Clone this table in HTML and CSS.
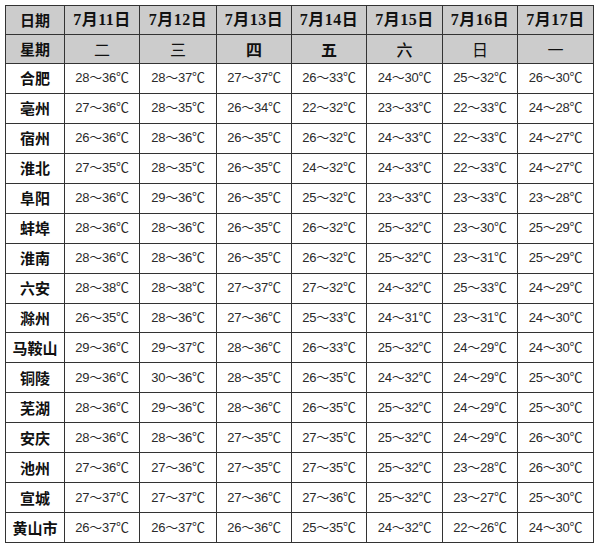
FILE: index.html
```html
<!DOCTYPE html>
<html lang="zh">
<head>
<meta charset="utf-8">
<link rel="stylesheet" href="styles.css">
</head>
<body>
<div class="page">
<table class="weather">
<colgroup>
<col class="c-city"><col class="c75"><col class="c77"><col class="c75"><col class="c75"><col class="c76"><col class="c75"><col class="c76">
</colgroup>
<thead>
<tr class="head"><th class="lab">日期</th><th>7月11日</th><th>7月12日</th><th>7月13日</th><th>7月14日</th><th>7月15日</th><th>7月16日</th><th>7月17日</th></tr>
<tr class="head"><th class="lab">星期</th><th class="wk">二</th><th class="wk">三</th><th class="wk strong">四</th><th class="wk strong">五</th><th class="wk mid">六</th><th class="wk">日</th><th class="wk">一</th></tr>
</thead>
<tbody>
<tr><th>合肥</th><td>28～36℃</td><td>28～37℃</td><td>27～37℃</td><td>26～33℃</td><td>24～30℃</td><td>25～32℃</td><td>26～30℃</td></tr>
<tr><th>亳州</th><td>27～36℃</td><td>28～35℃</td><td>26～34℃</td><td>22～32℃</td><td>23～33℃</td><td>22～33℃</td><td>24～28℃</td></tr>
<tr><th>宿州</th><td>26～36℃</td><td>28～36℃</td><td>26～35℃</td><td>26～32℃</td><td>24～33℃</td><td>22～33℃</td><td>24～27℃</td></tr>
<tr><th>淮北</th><td>27～35℃</td><td>28～35℃</td><td>26～35℃</td><td>24～32℃</td><td>24～33℃</td><td>22～33℃</td><td>24～27℃</td></tr>
<tr><th>阜阳</th><td>28～36℃</td><td>29～36℃</td><td>26～35℃</td><td>25～32℃</td><td>23～33℃</td><td>23～33℃</td><td>23～28℃</td></tr>
<tr><th>蚌埠</th><td>28～36℃</td><td>28～36℃</td><td>26～35℃</td><td>26～32℃</td><td>25～32℃</td><td>23～30℃</td><td>25～29℃</td></tr>
<tr><th>淮南</th><td>28～36℃</td><td>28～36℃</td><td>26～35℃</td><td>26～32℃</td><td>25～32℃</td><td>23～31℃</td><td>25～29℃</td></tr>
<tr><th>六安</th><td>28～38℃</td><td>28～38℃</td><td>27～37℃</td><td>27～32℃</td><td>24～32℃</td><td>25～33℃</td><td>24～29℃</td></tr>
<tr><th>滁州</th><td>26～35℃</td><td>28～36℃</td><td>27～36℃</td><td>25～33℃</td><td>24～31℃</td><td>23～31℃</td><td>24～30℃</td></tr>
<tr><th>马鞍山</th><td>29～36℃</td><td>29～37℃</td><td>28～36℃</td><td>26～33℃</td><td>25～32℃</td><td>24～29℃</td><td>24～30℃</td></tr>
<tr><th>铜陵</th><td>29～36℃</td><td>30～36℃</td><td>28～35℃</td><td>26～35℃</td><td>24～32℃</td><td>24～29℃</td><td>25～30℃</td></tr>
<tr><th>芜湖</th><td>28～36℃</td><td>29～36℃</td><td>28～36℃</td><td>26～35℃</td><td>25～32℃</td><td>24～29℃</td><td>25～30℃</td></tr>
<tr><th>安庆</th><td>28～36℃</td><td>28～36℃</td><td>27～35℃</td><td>27～35℃</td><td>25～32℃</td><td>24～29℃</td><td>26～30℃</td></tr>
<tr><th>池州</th><td>27～36℃</td><td>27～36℃</td><td>27～35℃</td><td>27～35℃</td><td>25～32℃</td><td>23～28℃</td><td>26～30℃</td></tr>
<tr><th>宣城</th><td>27～37℃</td><td>27～37℃</td><td>27～36℃</td><td>27～36℃</td><td>25～32℃</td><td>23～27℃</td><td>25～30℃</td></tr>
<tr><th>黄山市</th><td>26～37℃</td><td>26～37℃</td><td>26～36℃</td><td>25～35℃</td><td>24～32℃</td><td>22～26℃</td><td>24～30℃</td></tr>
</tbody>
</table>
</div>
</body>
</html>
```

FILE: styles.css
```css
html, body {
  margin: 0;
  padding: 0;
  background: #ffffff;
}
.page {
  padding: 5px 0 0 5px;
}
.weather {
  border-collapse: collapse;
  table-layout: fixed;
  width: 589px;
  height: 538px;
  border: 1px solid #111;
}
.c-city { width: 59px; }
.c75 { width: 75px; }
.c76 { width: 76px; }
.c77 { width: 77px; }
.weather th,
.weather td {
  border: 1px solid #333;
  height: 28px;
  padding: 0;
  text-align: center;
  vertical-align: middle;
  line-height: 16px;
}
.weather td {
  font-family: "Liberation Sans", "Noto Sans CJK SC", sans-serif;
  font-size: 13px;
  color: #2a2a2a;
  letter-spacing: -0.2px;
}
.weather th {
  font-family: "Noto Sans CJK SC", sans-serif;
  font-size: 15px;
  font-weight: bold;
  color: #111;
}
.head th {
  background: #cccccc;
  font-family: "Liberation Serif", "Noto Sans CJK SC", serif;
  font-size: 16px;
  letter-spacing: 0.5px;
}
.head th.lab,
.head th.wk {
  font-family: "Noto Sans CJK SC", sans-serif;
  font-size: 15px;
  letter-spacing: 0;
}
.head th.wk {
  font-weight: normal;
  font-size: 16px;
}
.head th.wk.strong {
  font-weight: bold;
}
.head th.wk.mid {
  font-weight: 500;
}
```
